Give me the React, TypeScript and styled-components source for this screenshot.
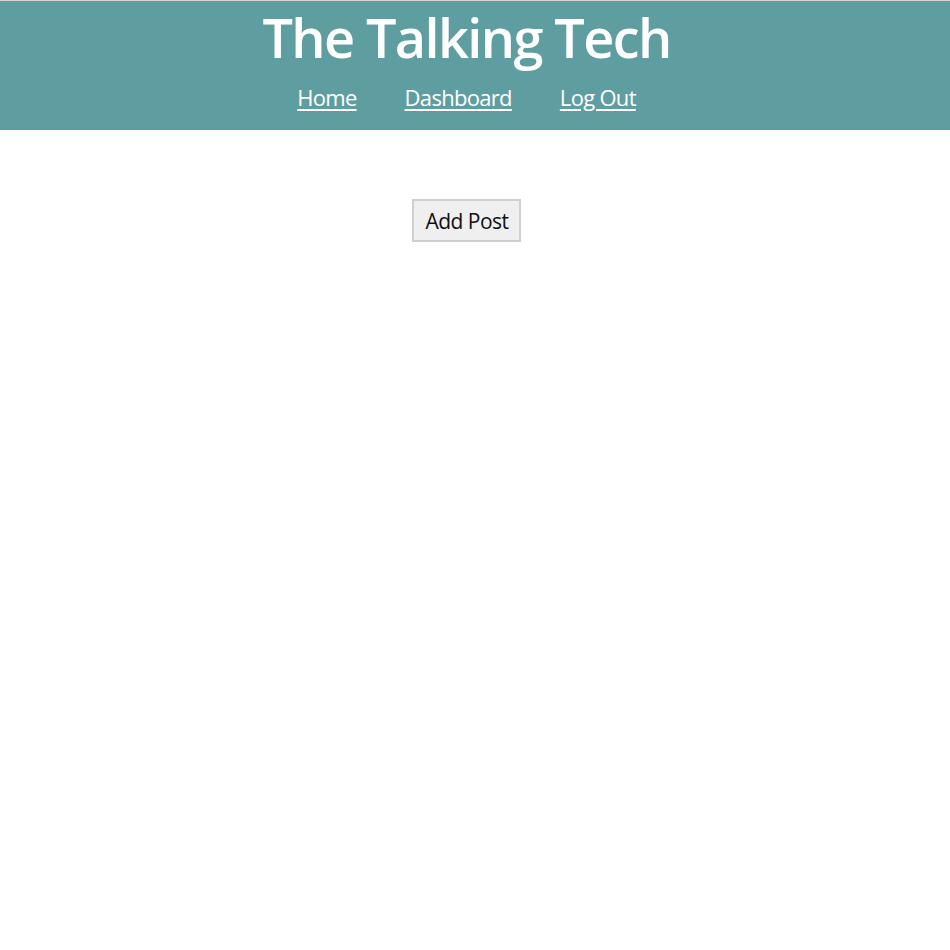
import React from "react";
import styled, { createGlobalStyle } from "styled-components";

const GlobalStyle = createGlobalStyle`
  html, body {
    margin: 0;
    padding: 0;
    background: #fff;
    font-family: "Open Sans", "Noto Sans", sans-serif;
  }
`;

const Header = styled.header`
  background: #5f9ea0;
  border-top: 1px solid #d4d4d4;
  height: 129px;
  padding-right: 17px;
  display: flex;
  flex-direction: column;
  align-items: center;
  color: #fff;
`;

const Title = styled.h1`
  margin: 4px 0 0;
  font-size: 54px;
  font-weight: 600;
  line-height: 64px;
  letter-spacing: -1.6px;
`;

const Nav = styled.nav`
  display: flex;
  gap: 48px;
  margin-top: 14px;
`;

const NavLink = styled.a`
  color: #fff;
  font-size: 22px;
  line-height: 28px;
  text-decoration: underline;
  text-underline-offset: 3px;
  letter-spacing: -0.7px;
`;

const Main = styled.main`
  padding: 69px 17px 0 0;
  display: flex;
  justify-content: center;
`;

const Button = styled.button`
  font-family: "Open Sans", "Noto Sans", sans-serif;
  font-size: 21px;
  color: #111;
  background: #efefef;
  border: 2px solid #cfcfcf;
  height: 43px;
  padding: 0 10px 0 11px;
  letter-spacing: -0.5px;
`;

const App = () => {
  return (
    <>
      <GlobalStyle />
      <Header>
        <Title>The Talking Tech</Title>
        <Nav>
          <NavLink href="#">Home</NavLink>
          <NavLink href="#">Dashboard</NavLink>
          <NavLink href="#">Log Out</NavLink>
        </Nav>
      </Header>
      <Main>
        <Button>Add Post</Button>
      </Main>
    </>
  );
};

export default App;
